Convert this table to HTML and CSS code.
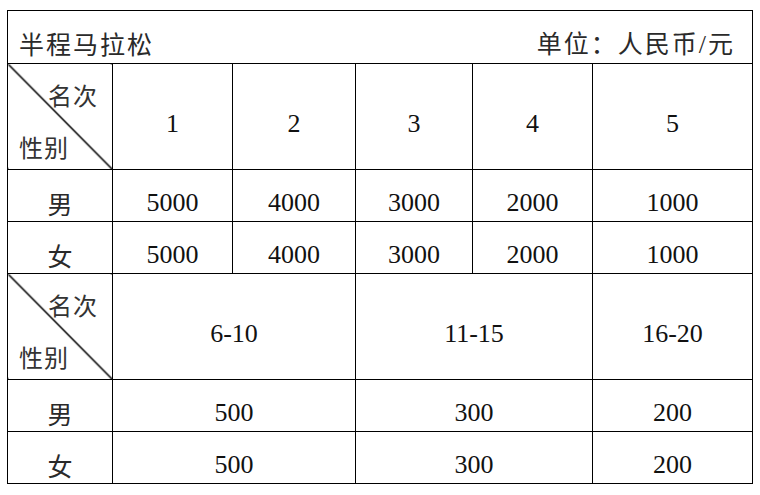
FILE: index.html
```html
<!DOCTYPE html>
<html>
<head>
<meta charset="utf-8">
<title>半程马拉松</title>
<link rel="stylesheet" href="styles.css">
</head>
<body>
<div class="page">
<table class="prize">
  <colgroup>
    <col class="c1"><col class="c2"><col class="c3"><col class="c4"><col class="c5"><col class="c6">
  </colgroup>
  <tr class="r-title">
    <td colspan="6" class="title">
      <div class="title-row"><span class="cjk-t">半程马拉松</span><span class="cjk-t">单位：人民币<span class="num">/</span>元</span></div>
    </td>
  </tr>
  <tr class="r-head">
    <td class="diag"><div class="diag-in"><span class="rank">名次</span><span class="sex">性别</span></div></td>
    <td class="num">1</td><td class="num">2</td><td class="num">3</td><td class="num">4</td><td class="num">5</td>
  </tr>
  <tr class="r-val">
    <td class="cjk">男</td><td class="num">5000</td><td class="num">4000</td><td class="num">3000</td><td class="num">2000</td><td class="num">1000</td>
  </tr>
  <tr class="r-val">
    <td class="cjk">女</td><td class="num">5000</td><td class="num">4000</td><td class="num">3000</td><td class="num">2000</td><td class="num">1000</td>
  </tr>
  <tr class="r-head">
    <td class="diag"><div class="diag-in"><span class="rank">名次</span><span class="sex">性别</span></div></td>
    <td colspan="2" class="num">6-10</td><td colspan="2" class="num">11-15</td><td class="num">16-20</td>
  </tr>
  <tr class="r-val">
    <td class="cjk">男</td><td colspan="2" class="num">500</td><td colspan="2" class="num">300</td><td class="num">200</td>
  </tr>
  <tr class="r-val">
    <td class="cjk">女</td><td colspan="2" class="num">500</td><td colspan="2" class="num">300</td><td class="num">200</td>
  </tr>
</table>
</div>
</body>
</html>
```

FILE: styles.css
```css
html, body {
  margin: 0;
  padding: 0;
  background: #fff;
}

.page {
  padding: 10px 0 0 7px;
}

.prize {
  border-collapse: collapse;
  table-layout: fixed;
  width: 746px;
  color: #111;
}

.c1 { width: 105px; }
.c2 { width: 120px; }
.c3 { width: 123px; }
.c4 { width: 117px; }
.c5 { width: 120px; }
.c6 { width: 160px; }

.prize td {
  border: 1px solid #000;
  text-align: center;
  vertical-align: middle;
  padding: 14px 0 0 0;
  line-height: 30px;
}

.r-title { height: 53px; }
.r-head { height: 105px; }
.r-val { height: 52px; }

.num {
  font-family: "Liberation Serif", "Times New Roman", serif;
  font-size: 26px;
}

.prize td.title {
  padding: 12px 17px 0 11px;
  color: #222;
}

.title-row {
  display: flex;
  justify-content: space-between;
  align-items: center;
}

.cjk-t {
  font-family: "Noto Sans CJK SC", sans-serif;
  font-weight: 400;
  font-size: 25px;
  letter-spacing: 2px;
  color: #2a2a2a;
}

.cjk {
  font-family: "Noto Sans CJK SC", sans-serif;
  font-weight: 400;
  font-size: 25px;
  color: #2a2a2a;
}

.prize td.diag {
  padding: 0;
  background: linear-gradient(to top right, transparent calc(50% - 1.1px), #000 calc(50% - 0.4px), #000 calc(50% + 0.4px), transparent calc(50% + 1.1px));
}

.diag-in {
  height: 105px;
  display: flex;
  flex-direction: column;
  justify-content: space-between;
  padding: 16px 14px 7px 11px;
  box-sizing: border-box;
  font-family: "Noto Sans CJK SC", sans-serif;
  font-weight: 400;
  font-size: 24px;
  letter-spacing: 1px;
  color: #333;
}

.rank { align-self: flex-end; }
.sex { align-self: flex-start; }
```
